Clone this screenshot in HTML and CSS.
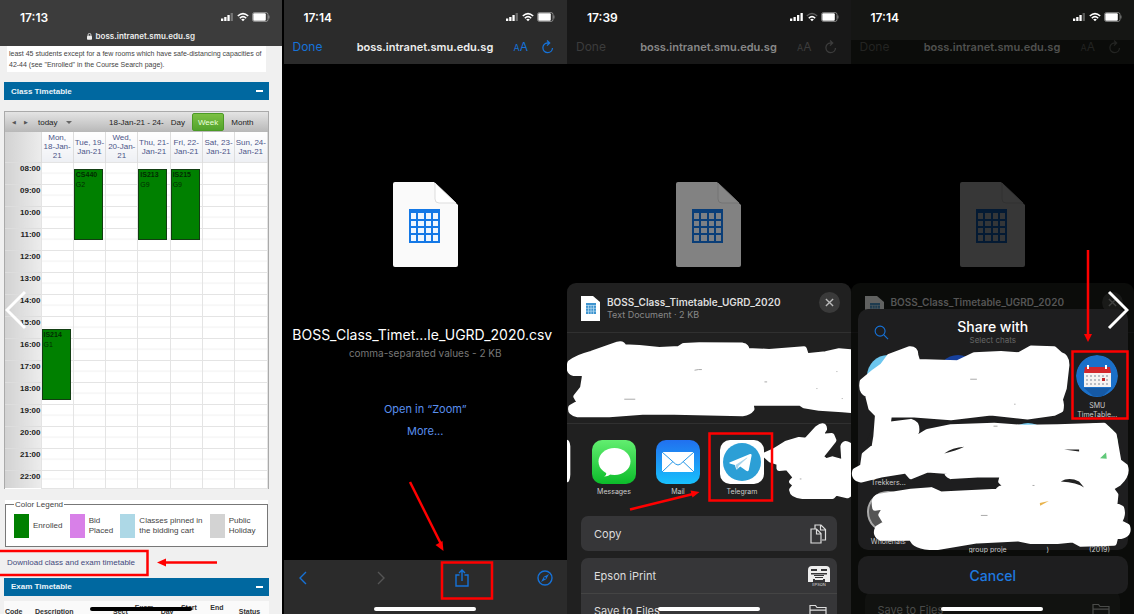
FILE: index.html
```html
<!DOCTYPE html>
<html lang="en">
<head>
<meta charset="utf-8">
<title>Export the BOSS timetable</title>
<link rel="stylesheet" href="styles.css">
</head>
<body>
<svg class="defs" aria-hidden="true">
  <symbol id="signal" viewBox="0 0 13 10"><path fill="currentColor" d="M0 6.500h2.300V9H0zM3.200 5h2.300v4H3.200zM6.400 3h2.300v6H6.400z"/><path fill="currentColor" opacity=".3" d="M9.600 1h2.300v8H9.600z"/></symbol>
  <symbol id="signal-full" viewBox="0 0 13 10"><path fill="currentColor" d="M0 6.500h2.300V9H0zM3.500 5h2.300v4H3.500zM7 3h2.300v6H7zM10.500 1h2.300v8h-2.300z"/></symbol>
  <symbol id="wifi" viewBox="0 0 12 10"><path fill="none" stroke="currentColor" stroke-width="1.600" d="M.8 4Q6-.9 11.200 4M2.800 6.200Q6 3 9.200 6.200"/><path fill="currentColor" d="M4.200 7.400Q6 6 7.800 7.400L6 9.300z"/></symbol>
  <symbol id="wifi-low" viewBox="0 0 12 10"><path fill="none" stroke="currentColor" stroke-width="1.300" opacity=".3" d="M.8 4Q6-.9 11.200 4"/><path fill="none" stroke="currentColor" stroke-width="1.600" d="M2.800 6.200Q6 3 9.200 6.200"/><path fill="currentColor" d="M4.200 7.400Q6 6 7.800 7.400L6 9.300z"/></symbol>
  <symbol id="battery" viewBox="0 0 18 10"><rect x=".5" y=".5" width="15.500" height="9" rx="2" fill="none" stroke="currentColor" opacity=".4"/><rect x="1.300" y="1.300" width="12.500" height="7.400" rx="1" fill="currentColor"/><path d="M17 3.500v3" stroke="currentColor" opacity=".4"/></symbol>
  <symbol id="doc" viewBox="0 0 65 85"><path fill="#fafafa" d="M2 0h39l24 23v60q0 2-2 2H2q-2 0-2-2V2q0-2 2-2z"/><path fill="#fff" stroke="#ddd" d="M42 1v16q0 4 4 4h17z"/><path fill="#1478e6" d="M16 27h31v34H16z"/><path fill="#eef6ff" d="M18 31h5v6h-5zm7 0h6v6h-6zm8 0h5v6h-5zm7 0h5v6h-5zM18 39h5v5h-5zm7 0h6v5h-6zm8 0h5v5h-5zm7 0h5v5h-5zM18 46h5v5h-5zm7 0h6v5h-6zm8 0h5v5h-5zm7 0h5v5h-5zM18 53h5v6h-5zm7 0h6v6h-6zm8 0h5v6h-5zm7 0h5v6h-5z"/></symbol>
  <symbol id="doc-small" viewBox="0 0 19 25"><path fill="#fff" d="M0 0h12l7 6v19H0z"/><path fill="#3f94cf" d="M5 7h10v11H5z"/><path stroke="#b9dcf2" stroke-width=".7" d="M5 9.500h10M5 12.300h10M5 15.200h10M7.500 9v9M10 9v9M12.500 9v9"/></symbol>
  <symbol id="reload" viewBox="0 0 14 14"><path fill="none" stroke="currentColor" stroke-width="1.300" d="M8 3H6.500A4.800 4.800 0 1 0 11.500 8M6 .5L8.700 3 6 5.600"/></symbol>
  <symbol id="folder" viewBox="0 0 18 14"><path fill="none" stroke="currentColor" stroke-width="1.200" d="M1 13V1.500h5.500l1.500 2h9V13zM1 6.200h16"/></symbol>
</svg>

<main class="slide">
  <section class="phone safari">
    <header class="safari-head">
      <div class="status"><span>17:13</span><span class="status-icons"><svg class="i-signal"><use href="#signal"/></svg><svg class="i-wifi"><use href="#wifi"/></svg><svg class="i-battery"><use href="#battery"/></svg></span></div>
      <div class="address"><svg class="lock" viewBox="0 0 6 8"><rect y="3" width="6" height="5" rx="1" fill="#eee"/><path d="M1.300 3.500V2a1.700 1.700 0 0 1 3.400 0v1.500" fill="none" stroke="#eee"/></svg>boss.intranet.smu.edu.sg</div>
    </header>
    <div class="page">
      <p class="note">least 45 students except for a few rooms which have safe-distancing capacities of 42-44 (see "Enrolled" in the Course Search page).</p>
      <h2 class="bar">Class Timetable<button class="fold" aria-label="Collapse class timetable"></button></h2>
      <div class="calendar">
        <div class="cal-tools">
          <button class="step" aria-label="Previous">◀</button><button class="step" aria-label="Next">▶</button>
          <button class="today">today <span class="caret"></span></button>
          <span class="range">18-Jan-21 - 24-</span>
          <button class="view">Day</button><button class="view on">Week</button><button class="view">Month</button>
        </div>
        <table class="week">
          <thead><tr><th class="hour"></th><th>Mon,<br>18-Jan-<br>21</th><th>Tue, 19-<br>Jan-21</th><th>Wed,<br>20-Jan-<br>21</th><th>Thu, 21-<br>Jan-21</th><th>Fri, 22-<br>Jan-21</th><th>Sat, 23-<br>Jan-21</th><th>Sun, 24-<br>Jan-21</th></tr></thead>
          <tbody>
            <tr><th class="hour">08:00</th><td></td><td><div class="event"><b>CS440</b>G2</div></td><td></td><td><div class="event"><b>IS213</b>G9</div></td><td><div class="event"><b>IS215</b>G9</div></td><td></td><td></td></tr>
            <tr><th class="hour">09:00</th><td></td><td></td><td></td><td></td><td></td><td></td><td></td></tr>
            <tr><th class="hour">10:00</th><td></td><td></td><td></td><td></td><td></td><td></td><td></td></tr>
            <tr><th class="hour">11:00</th><td></td><td></td><td></td><td></td><td></td><td></td><td></td></tr>
            <tr><th class="hour">12:00</th><td></td><td></td><td></td><td></td><td></td><td></td><td></td></tr>
            <tr><th class="hour">13:00</th><td></td><td></td><td></td><td></td><td></td><td></td><td></td></tr>
            <tr><th class="hour">14:00</th><td></td><td></td><td></td><td></td><td></td><td></td><td></td></tr>
            <tr><th class="hour">15:00</th><td><div class="event half"><b>IS214</b>G1</div></td><td></td><td></td><td></td><td></td><td></td><td></td></tr>
            <tr><th class="hour">16:00</th><td></td><td></td><td></td><td></td><td></td><td></td><td></td></tr>
            <tr><th class="hour">17:00</th><td></td><td></td><td></td><td></td><td></td><td></td><td></td></tr>
            <tr><th class="hour">18:00</th><td></td><td></td><td></td><td></td><td></td><td></td><td></td></tr>
            <tr><th class="hour">19:00</th><td></td><td></td><td></td><td></td><td></td><td></td><td></td></tr>
            <tr><th class="hour">20:00</th><td></td><td></td><td></td><td></td><td></td><td></td><td></td></tr>
            <tr><th class="hour">21:00</th><td></td><td></td><td></td><td></td><td></td><td></td><td></td></tr>
            <tr class="last"><th class="hour">22:00</th><td></td><td></td><td></td><td></td><td></td><td></td><td></td></tr>
          </tbody>
        </table>
      </div>
      <div class="legend-wrap">
        <fieldset class="legend">
          <legend>Color Legend</legend>
          <div class="keys">
            <span class="key"><i class="swatch enrolled"></i><span>Enrolled</span></span>
            <span class="key"><i class="swatch bid"></i><span>Bid<br>Placed</span></span>
            <span class="key"><i class="swatch pinned"></i><span>Classes pinned in<br>the bidding cart</span></span>
            <span class="key"><i class="swatch holiday"></i><span>Public<br>Holiday</span></span>
          </div>
        </fieldset>
      </div>
      <div class="download"><a href="#download">Download class and exam timetable</a></div>
      <h2 class="bar">Exam Timetable<button class="fold" aria-label="Collapse exam timetable"></button></h2>
      <table class="exams"><tr><th class="c-code">Code</th><th class="c-desc">Description</th><th>Sect</th><th>Exam Date</th><th>Day</th><th>Start Time</th><th>End Time</th><th class="c-status">Status</th></tr></table>
    </div>
    <span class="home dark"></span>
    <svg class="marks" viewBox="0 0 284 614"><rect x="-2" y="551" width="149.500" height="24" class="box"/><path class="shaft" d="M164 562.500h53"/><path class="tip" d="M157 562.500l9-4v8z"/></svg>
  </section>

  <section class="phone">
    <header class="viewer-head">
      <div class="status"><span>17:14</span><span class="status-icons"><svg class="i-signal"><use href="#signal"/></svg><svg class="i-wifi"><use href="#wifi"/></svg><svg class="i-battery"><use href="#battery"/></svg></span></div>
      <div class="viewer-bar"><button class="done">Done</button><span class="host">boss.intranet.smu.edu.sg</span><button class="aa" aria-label="Text size"><small>A</small>A</button><button class="reload" aria-label="Reload"><svg><use href="#reload"/></svg></button></div>
    </header>
    <div class="preview">
      <svg class="doc"><use href="#doc"/></svg>
      <h1 class="file">BOSS_Class_Timet...le_UGRD_2020.csv</h1>
      <p class="kind">comma-separated values - 2 KB</p>
      <a class="open first" href="#zoom">Open in “Zoom”</a>
      <a class="open" href="#more">More...</a>
    </div>
    <nav class="bottom">
      <button aria-label="Back"><svg width="10" height="14" viewBox="0 0 10 14"><path d="M8 1L2 7l6 6"/></svg></button>
      <button class="off" aria-label="Forward"><svg width="10" height="14" viewBox="0 0 10 14"><path d="M2 1l6 6-6 6"/></svg></button>
      <button aria-label="Share"><svg width="14" height="18" viewBox="0 0 14 18"><path d="M4.500 6H1v11h12V6H9.500M7 12V1M4 4l3-3 3 3"/></svg></button>
      <button aria-label="Open in Safari"><svg width="16" height="16" viewBox="0 0 16 16"><circle cx="8" cy="8" r="7"/><path fill="currentColor" stroke="none" d="M12 4L6.800 6.800 4 12l5.200-2.800z"/><circle cx="8" cy="8" r=".9" fill="#2b2b2b" stroke="none"/></svg></button>
    </nav>
    <span class="home"></span>
    <svg class="marks" viewBox="0 0 284 614"><rect x="158" y="562.500" width="50" height="36" class="box"/><path class="shaft" d="M126 482l31 62"/><path class="tip" d="M159.500 551l-8-6 7-4z"/></svg>
  </section>

  <section class="phone dim">
    <header class="viewer-head">
      <div class="status"><span>17:39</span><span class="status-icons"><svg class="i-signal"><use href="#signal-full"/></svg><svg class="i-wifi"><use href="#wifi-low"/></svg><svg class="i-battery"><use href="#battery"/></svg></span></div>
      <div class="viewer-bar"><button class="done">Done</button><span class="host">boss.intranet.smu.edu.sg</span><button class="aa" aria-label="Text size"><small>A</small>A</button><button class="reload" aria-label="Reload"><svg><use href="#reload"/></svg></button></div>
    </header>
    <div class="preview short"><svg class="doc"><use href="#doc"/></svg></div>
    <div class="sheet">
      <div class="sheet-head"><svg class="thumb"><use href="#doc-small"/></svg><div><h2>BOSS_Class_Timetable_UGRD_2020</h2><p>Text Document · 2 KB</p></div><button class="close" aria-label="Close"><svg viewBox="0 0 10 10"><path d="M1 1l8 8M9 1L1 9"/></svg></button></div>
      <div class="people"></div>
      <div class="apps">
        <button class="app"><svg viewBox="0 0 44 44"><defs><linearGradient id="g1" x2="0" y2="1"><stop stop-color="#62ee70"/><stop offset="1" stop-color="#0cbc2a"/></linearGradient></defs><rect width="44" height="44" rx="10" fill="url(#g1)"/><ellipse cx="22.500" cy="21.500" rx="16" ry="13.500" fill="#fff"/><path fill="#fff" d="M14 32q1 3-2 4.500 5 0 7-3z"/></svg>Messages</button>
        <button class="app"><svg viewBox="0 0 44 44"><defs><linearGradient id="g2" x2="0" y2="1"><stop stop-color="#2170ef"/><stop offset="1" stop-color="#18c0fc"/></linearGradient></defs><rect width="44" height="44" rx="10" fill="url(#g2)"/><rect x="6" y="12" width="32" height="20" rx="1" fill="#fff"/><path d="M6 12l13.500 12q2.500 2 5 0L38 12M6 32l11-10.500M38 32L27 21.500" fill="none" stroke="#2697e8"/></svg>Mail</button>
        <button class="app"><svg viewBox="0 0 44 44"><rect width="44" height="44" rx="10" fill="#fff"/><circle cx="22" cy="22" r="19" fill="#2c9fd6"/><path fill="#fff" d="M9.500 22.500L30 14q2-.5 1.600 1.500L28.800 30q-.8 2-2.600.8l-6-4.400-3 2.900q-1 .5-1.200-.8L14.800 25l-5-1.500q-1-.5-.3-1z"/><path d="M15.500 25l11.500-7.500q.8-.2.3.4L18.500 26l-.7 3.300-1.300-.6z" fill="#a9d4ea"/></svg>Telegram</button>
      </div>
      <button class="action single">Copy<svg class="copy" viewBox="0 0 17 20"><g fill="none" stroke="#ddd" stroke-width="1.200"><path d="M5 5V1h6l4.500 4.500V16H12M10.500 1v5h5"/><path fill="#363638" d="M1 5h5.500L11 9.500V19H1zM6.500 5v5H11"/></g></svg></button>
      <div class="actions">
        <button class="action">Epson iPrint<svg class="epson" viewBox="0 0 24 22"><path fill="#eee" d="M5 1h14q4 0 4 4v12h-5v-3H6v3H1V5q0-4 4-4z"/><path fill="#363638" d="M4 4h6v2H4zm10 0h6v2h-6zM4 8h16v1.500H4zM7 10h10v1H7zm1 2h8v1H8z"/><path stroke="#eee" d="M8 14.500h8"/><text x="12" y="21" text-anchor="middle">EPSON</text></svg></button>
        <button class="action">Save to Files<svg class="folder"><use href="#folder"/></svg></button>
      </div>
    </div>
    <svg class="marks" viewBox="0 0 284 614">
      <g class="scribble" transform="translate(-1 275) scale(.333)">
        <path d="M12 264Q35 246 76 236L155 208Q170 204 174 216L220 218 280 224 340 221 354 212 400 210 530 211Q543 213 544 227L610 230 715 222 722 243 780 237 820 228 870 232V408L830 404 760 400 715 392 705 385H555L558 402Q550 413 530 416L325 412 230 412 130 419H35Q10 415 15 397L40 383 30 365 50 340 56 303 50 295H22Q5 290 12 264z"/>
        <path class="speck" d="M386 286q12-3 22-2M175 373h33M596 321h8M812 290h3M752 341h3M828 371h3"/>
      </g>
      <g class="scribble" transform="translate(-1 425) scale(.333)">
        <path d="M598 90L625 78 660 56 700 44 722 46 755 10Q775-5 776 12L760 35 798 32 804 46 785 70 765 95 780 108 800 102 835 112 832 65Q835 50 850 60L865 95V200L845 212 810 204 800 214H710Q680 212 678 195L690 180 678 170 690 158 675 140 665 128 640 130V113L615 105z"/>
        <path d="M0 52h2q3 5 3 12v85q0 8-3 15H0z"/><path class="speck" d="M702 162h5"/>
      </g>
      <rect x="142.500" y="433.500" width="62.500" height="67" class="box"/><path class="shaft" d="M63 509.500l63-15.500"/><path class="tip" d="M132.500 492l-9-1.500 2 7z"/>
    </svg>
    <span class="home"></span>
  </section>

  <section class="phone dimmer">
    <header class="viewer-head">
      <div class="status"><span>17:14</span><span class="status-icons"><svg class="i-signal"><use href="#signal"/></svg><svg class="i-wifi"><use href="#wifi"/></svg><svg class="i-battery"><use href="#battery"/></svg></span></div>
      <div class="viewer-bar"><button class="done">Done</button><span class="host">boss.intranet.smu.edu.sg</span><button class="aa" aria-label="Text size"><small>A</small>A</button><button class="reload" aria-label="Reload"><svg><use href="#reload"/></svg></button></div>
    </header>
    <div class="preview short"><svg class="doc"><use href="#doc"/></svg></div>
    <div class="sheet">
      <div class="sheet-head"><svg class="thumb"><use href="#doc-small"/></svg><div><h2>BOSS_Class_Timetable_UGRD_2020</h2></div><button class="close" aria-label="Close"><svg viewBox="0 0 10 10"><path d="M1 1l8 8M9 1L1 9"/></svg></button></div>
      <div class="behind"></div>
      <div class="actions"><button class="action">Save to Files<svg class="folder"><use href="#folder"/></svg></button></div>
    </div>
    <div class="overlay">
      <div class="share">
        <div class="share-head"><button class="search" aria-label="Search"><svg viewBox="0 0 16 16"><circle cx="6.500" cy="6.500" r="5.300"/><path d="M10.500 10.500L15 15"/></svg></button><div><h2>Share with</h2><p>Select chats</p></div></div>
        <div class="chats">
          <span class="chat"><i class="face sky"></i></span>
          <span class="chat"><i class="face navy"></i></span>
          <span class="chat"></span>
          <button class="chat"><svg class="face" viewBox="0 0 42 42"><circle cx="21" cy="21" r="21" fill="#1b70c9"/><path fill="#1559a5" d="M8 33h27l-8 8q-6 1-10 0z"/><path fill="#f5f2f2" d="M8 17h27v15H8z"/><path fill="#d3262b" d="M9 12h25l1 6H8z"/><path stroke="#fff" stroke-width="2" d="M12 10v4M30 10v4"/><path stroke="#b9bcc4" stroke-width="2" stroke-dasharray="2 2" d="M10 21h23M10 25h23M10 29h23"/><path fill="#c3272c" d="M26 23h3v3h-3z"/></svg><span class="name">SMU<br>TimeTable...</span></button>
        </div>
        <div class="chats">
          <span class="chat"><i class="face black"></i><span class="name"><br>Trekkers...</span></span>
          <span class="chat"></span>
          <span class="chat"><i class="face sky"></i></span>
          <span class="chat"><i class="face green"></i><span class="name"><br>FAM</span></span>
        </div>
        <div class="chats">
          <span class="chat"><i class="face grey"></i><span class="name">Wholehats</span></span>
          <span class="chat"></span>
          <span class="chat"></span>
          <span class="chat"><i class="face red"></i></span>
        </div>
      </div>
      <button class="cancel">Cancel</button>
    </div>
    <svg class="marks" viewBox="0 0 284 614">
      <g class="scribble" transform="translate(0 275) scale(.333)">
        <path d="M34 320L70 290 95 272 115 245 175 222Q195 220 194 240L200 260 320 264 370 240 450 236 505 240 540 220 610 222 630 240Q648 245 648 270L640 340 628 375Q634 385 630 405L610 415 530 426 420 414 300 428 190 420H115L108 470 120 448 180 440Q200 445 197 470L180 500 230 470 300 456 430 452 520 458 620 456 760 452 790 480 804 560 824 575Q832 600 805 625L780 640 795 660 792 690 812 700Q820 720 805 742L830 755Q838 780 810 785H795L790 805 690 808 665 795 620 800H540L500 792 380 798 260 818Q190 820 182 790L90 790Q70 780 80 760L105 745 90 720 105 695 72 700Q65 670 85 665L180 650 240 645 270 658 440 650Q445 640 465 635L450 620Q452 600 470 600L380 600 300 605Q285 600 290 590L230 585 180 605 165 588 90 600 30 615Q5 610 12 588L35 575 40 540 70 515 75 485 80 420 60 400 50 360Q28 350 34 320z"/>
        <path class="cut" d="M280 536q25-18 60-20-25 12-60 20zM630 620q25-15 55 0l15 18q-20-15-70-18zM640 524h45v6z"/>
        <path class="speck" d="M358 313h20M490 388h4M428 454h12M545 632h6M390 722h20"/>
        <path fill="#60c879" stroke="none" d="M748 550l18-17 2 19z"/><path fill="#e8b34c" stroke="none" d="M567 685l27-6-26 14z"/>
      </g>
      <rect x="221.500" y="351.500" width="55" height="67" class="box"/><path class="shaft" d="M237 250v86"/><path class="tip" d="M237 342l-4-8h8z"/>
    </svg>
    <div class="peek"><span>group proje</span><span>)</span><span>(2019)</span></div>
    <span class="home"></span>
  </section>

  <button class="turn prev" aria-label="Previous slide"><svg viewBox="0 0 22 40"><path d="M20 2L2 20l18 18"/></svg></button>
  <button class="turn next" aria-label="Next slide"><svg viewBox="0 0 22 40"><path d="M2 2l18 18L2 38"/></svg></button>
</main>
</body>
</html>
```
FILE: styles.css
```css
* { box-sizing: border-box; }
body { margin: 0; background: #000; font-family: Inter, "Liberation Sans", sans-serif; }
h1, h2, p { margin: 0; font-weight: 400; }
button { border: 0; padding: 0; margin: 0; background: none; font: inherit; color: inherit; }
a { color: inherit; text-decoration: none; }
.defs { display: none; }

.slide { position: relative; display: grid; grid-template-columns: repeat(4, 1fr); height: 100vh; overflow: hidden; }
.phone { position: relative; display: flex; flex-direction: column; min-width: 0; overflow: hidden; color: #fff; }

.status { display: flex; justify-content: space-between; align-items: center; height: 34px; padding: 0 12px 0 20px; font-size: 12px; font-weight: 600; color: #fff; }
.status-icons { display: flex; gap: 3px; align-items: center; }
.status-icons svg { height: 10px; }
.i-signal { width: 13px; }
.i-wifi { width: 12px; }
.i-battery { width: 18px; }

/* Timetable page */
.safari { background: #f0f0f0; border-right: 2px solid #000; color: #333; font-family: "Liberation Sans", Arial, sans-serif; }
.safari-head { background: #3c3c3c; font-family: Inter, sans-serif; height: 46px; flex: none; }
.address { display: flex; justify-content: center; gap: 4px; height: 4px; align-items: center; color: #eee; font-size: 8px; font-weight: 600; }
.lock { width: 5px; height: 7px; }
.page { padding: 0 13px 0 4px; }
.note { margin: 0 3px 10px; padding: 2px; background: #fff; font-size: 7px; line-height: 11px; color: #444; }
.bar { display: flex; justify-content: space-between; align-items: center; height: 18px; padding: 0 6px 0 7px; background: #0068a0; color: #eaf4fa; font-size: 8px; font-weight: 700; }
.fold { width: 7px; height: 2px; background: #fff; }
.calendar { margin-top: 11px; border-left: 1px solid #aaa; border-right: 1px solid #aaa; }
.cal-tools { display: flex; align-items: center; height: 21px; padding-left: 7px; background: linear-gradient(#e4e4e4, #b8b8b8); border-top: 1px solid #aaa; font-size: 8px; color: #222; white-space: nowrap; }
.step { width: 12px; text-align: left; font-size: 5px; color: #555; }
.today { display: flex; align-items: center; gap: 8px; margin-left: 2px; }
.caret { border: 3px solid transparent; border-top-color: #666; border-bottom: 0; }
.range { margin-left: auto; font-size: 8px; }
.view { padding: 0 7px; height: 18px; }
.view:last-child { padding-right: 14px; }
.view.on { background: linear-gradient(#7cc043, #52a32c); border: 1px solid #4b9a25; border-radius: 2px; padding: 0 5px; color: #eaffdc; }
.week { width: 100%; table-layout: fixed; border-collapse: collapse; background: #fff; }
.week th { padding: 0; font-weight: 400; white-space: nowrap; }
.week thead th { height: 30px; border-right: 1px solid #ddd; background: linear-gradient(#fff, #eef0f4); color: #4b5588; font-size: 8px; line-height: 9px; }
.week .hour { width: 36px; background: linear-gradient(90deg, #d2d2d2, #ececec); font-size: 8px; }
.week tbody th { height: 22px; vertical-align: top; text-align: right; font-weight: 700; line-height: 12px; color: #222; border-top: 1px solid #ddd; }
.week td { position: relative; padding: 0; border: 1px solid #e4e4e4; background: linear-gradient(#fff 50%, #f2f2f2 50%, #fff 56%); }
.week .last th { height: 18px; }
.event { position: absolute; top: 6px; left: 0; z-index: 1; width: 29px; height: 71px; padding-left: 1px; border: 1px solid #123d12; background: #008000; color: #022c02; font-size: 7px; line-height: 10px; }
.event b { display: block; }
.event.half { top: 12px; }
.legend-wrap { margin: 11px 1px 0; background: #fff; }
.legend { margin: 0; height: 47px; padding: 0 11px 0 8px; border: 1px solid #777; font-size: 8px; line-height: 10px; color: #444; }
.legend legend { padding: 0 1px; }
.keys { display: flex; justify-content: space-between; align-items: center; height: 32px; }
.key { display: flex; align-items: center; gap: 4px; white-space: nowrap; }
.swatch { width: 15px; height: 24px; }
.enrolled { background: #008000; }
.bid { background: #d880e8; }
.pinned { background: #add8e6; }
.holiday { background: #d3d3d3; }
.download { display: flex; align-items: center; height: 31px; padding-left: 3px; color: #41497c; font-size: 8px; }
.exams { margin-top: 5px; width: 100%; background: #fafafa; color: #333; font-size: 7px; line-height: 9px; border-collapse: collapse; }
.exams th { padding: 2px 1px; }
.exams .c-desc { width: 78px; text-align: left; }
.exams .c-code { width: 30px; text-align: left; }
.exams .c-status { width: 38px; }

/* File viewer */
.viewer-head { height: 64px; flex: none; background: #2b2b2b; }
.viewer-bar { display: flex; align-items: center; height: 25px; padding: 0 12px 0 9px; font-size: 12px; color: #1672d8; }
.host { margin-left: auto; margin-right: auto; font-weight: 600; font-size: 11px; color: #eee; }
.done { width: 44px; text-align: left; }
.aa { margin-right: 13px; }
.aa small { font-size: 9px; }
.reload svg { display: block; width: 14px; height: 14px; }
.preview { display: flex; flex-direction: column; align-items: center; flex: 1; padding-top: 118px; background: #000; }
.preview.short { flex: none; height: 219px; }
.doc { width: 65px; height: 85px; flex: none; }
.file { margin-top: 58px; padding-right: 6px; font-size: 14px; line-height: 20px; }
.kind { font-size: 10px; line-height: 16px; color: #777; }
.open { font-size: 11px; line-height: 22px; color: #5a8fee; }
.open.first { margin-top: 37px; }
.bottom { display: flex; justify-content: space-between; height: 54px; padding: 10px 14px 28px; background: #2b2b2b; color: #1672d8; align-items: center; }
.bottom svg { display: block; fill: none; stroke: currentColor; stroke-width: 1.400; }
.bottom .off { color: #555; }
.home { position: absolute; left: 50%; bottom: 3px; width: 102px; height: 4px; margin-left: -51px; border-radius: 2px; background: #fff; }
.home.dark { background: #000; }
.marks { position: absolute; left: 0; top: 0; width: 284px; height: 614px; pointer-events: none; }
.box { fill: none; stroke: #f00; stroke-width: 2.500; }
.shaft { fill: none; stroke: #f00; stroke-width: 2.500; }
.tip { fill: #f00; }
.scribble { fill: #fff; stroke: #fff; stroke-width: 16; stroke-linejoin: round; }
.speck { fill: none; stroke: #aaa; stroke-width: 3; }
.cut { fill: #222; stroke: none; }

/* Share sheet */
.dim .viewer-head { background: #181818; }
.dim .viewer-bar { color: #3c3c3c; }
.dim .host { color: #888; }
.dim .doc { opacity: .52; }
.sheet { flex: 1; background: #202020; border-radius: 9px 9px 0 0; overflow: hidden; }
.sheet-head { display: flex; align-items: flex-start; height: 50px; padding: 9px 11px 0 14px; gap: 7px; border-bottom: 1px solid #303030; }
.thumb { width: 19px; height: 25px; margin-top: 4px; }
.sheet h2 { font-size: 10px; line-height: 20px; font-weight: 600; color: #ddd; }
.sheet p { font-size: 9px; line-height: 6px; color: #888; }
.close { width: 21px; height: 21px; margin-left: auto; border-radius: 50%; background: #3a3a3a; }
.close svg { display: block; width: 9px; height: 9px; margin: auto; stroke: #bbb; stroke-width: 1.500; }
.people { height: 91px; border-bottom: 1px solid #303030; }
.apps { display: flex; gap: 20px; padding: 16px 0 0 25px; height: 92px; }
.app { display: flex; flex-direction: column; align-items: center; width: 44px; gap: 3px; font-size: 7px; line-height: 10px; color: #ccc; }
.app svg { width: 44px; height: 44px; flex: none; }
.action { display: flex; justify-content: space-between; align-items: center; width: 100%; height: 35px; padding: 0 10px 0 13px; font-size: 11px; color: #ddd; }
.action.single { width: auto; margin: 0 14px 7px; min-width: calc(100% - 28px); border-radius: 7px; background: #363638; }
.actions { margin: 0 14px; border-radius: 7px 7px 0 0; background: #363638; }
.actions .action + .action { border-top: 1px solid #444; }
.copy { width: 17px; height: 20px; }
.epson { width: 24px; height: 22px; margin-right: -4px; }
.epson text { font-size: 4px; fill: #ddd; }
.folder { width: 18px; height: 14px; }

/* Chat picker */
.dimmer { background: #000; }
.dimmer .viewer-head { background: linear-gradient(#151614 40px, #0b0c0a 40px); }
.dimmer .viewer-bar { color: #232422; }
.dimmer .host { color: #50514f; }
.dimmer .doc { opacity: .22; }
.dimmer .sheet { background: #0b0c0a; }
.dimmer .sheet-head { border-color: #111; }
.dimmer .sheet h2 { color: #555; }
.dimmer .thumb { opacity: .35; }
.dimmer .close { opacity: .3; }
.behind { height: 259px; }
.dimmer .actions { background: #111210; }
.dimmer .action { color: #4a4b49; }
.overlay { position: absolute; inset: 0; display: flex; flex-direction: column; justify-content: flex-end; gap: 6px; padding: 0 6px 20px 7px; }
.share { height: 241px; overflow: hidden; border-radius: 10px; background: #1e1e1f; }
.share-head { position: relative; height: 46px; padding-top: 9px; text-align: center; }
.share-head h2 { font-size: 14px; line-height: 18px; font-weight: 500; }
.share-head p { font-size: 8px; line-height: 9px; color: #666; }
.search { position: absolute; left: 16px; top: 16px; width: 15px; height: 15px; }
.search svg { display: block; fill: none; stroke: #1672d8; stroke-width: 1.200; }
.chats { display: grid; grid-template-columns: repeat(4, 1fr); height: 68px; margin: 0 -4px 0 -4px; }
.chat { display: flex; flex-direction: column; align-items: center; gap: 4px; font-size: 7px; line-height: 9px; color: #ccc; }
.name { text-align: center; white-space: nowrap; }
.face { width: 42px; height: 42px; flex: none; border-radius: 50%; }
.sky { background: #6cc6ee; }
.navy { background: #17409c; }
.black { background: #1e1e1f; }
.green { background: #6bd36e; }
.grey { background: #555; border: 2px solid #aaa; }
.red { background: #a82a3c; }
.cancel { height: 38px; border-radius: 10px; background: #1e1e1f; color: #1f7ae0; font-size: 14px; font-weight: 500; }
.peek { position: absolute; left: 118px; right: 24px; bottom: 61px; display: flex; justify-content: space-between; height: 7px; overflow: hidden; font-size: 7px; line-height: 8px; color: #ccc; }

/* Slide controls */
.turn { position: absolute; top: calc(50% - 17px); width: 22px; height: 40px; }
.turn svg { display: block; fill: none; stroke: #fff; stroke-width: 3; }
.prev { left: 5px; }
.next { right: 5px; }
```
